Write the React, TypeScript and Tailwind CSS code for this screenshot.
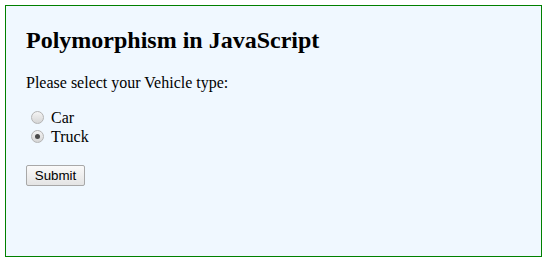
import React from "react";

function Radio({ checked }: { checked?: boolean }) {
  return (
    <span className="inline-flex h-[13px] w-[13px] shrink-0 items-center justify-center rounded-full border border-[#b4b4b4] bg-gradient-to-b from-[#f4f4f4] to-[#d6d6d6]">
      {checked && <span className="h-[5px] w-[5px] rounded-full bg-[#4a4a4a]" />}
    </span>
  );
}

export default function App() {
  return (
    <div className="h-[263px] w-[548px] bg-white p-[5px]" style={{ fontFamily: '"Liberation Serif", "Times New Roman", serif' }}>
      <div className="h-[252px] w-[537px] border border-[#008000] bg-[#f0f8ff] px-5 pt-5 text-black">
        <h2 className="m-0 text-[24px] font-bold leading-[28px]">Polymorphism in JavaScript</h2>
        <p className="mt-5 text-[16px] leading-[18px]">Please select your Vehicle type:</p>
        <div className="mt-[16px] flex flex-col">
          <label className="flex h-[19px] items-center pl-[5px] text-[16px] leading-[18px]">
            <Radio />
            <span className="ml-[7px]">Car</span>
          </label>
          <label className="flex h-[19px] items-center pl-[5px] text-[16px] leading-[18px]">
            <Radio checked />
            <span className="ml-[7px]">Truck</span>
          </label>
        </div>
        <button
          className="mt-[19px] flex h-[21px] w-[59px] items-center justify-center rounded-[2px] border border-[#a8a8a8] bg-gradient-to-b from-[#fafafa] to-[#e4e4e4] text-[13.33px] text-black"
          style={{ fontFamily: '"Liberation Sans", Arial, sans-serif' }}
        >
          Submit
        </button>
      </div>
    </div>
  );
}
